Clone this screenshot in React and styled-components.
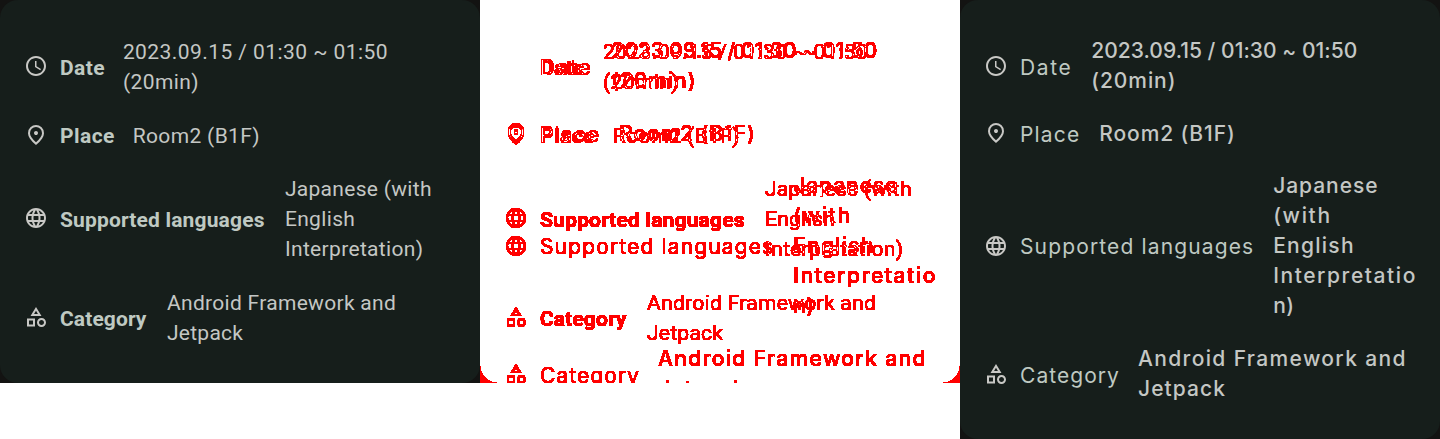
import React from "react";
import styled, { createGlobalStyle } from "styled-components";

const GlobalStyle = createGlobalStyle`
  * { box-sizing: border-box; }
  body { margin: 0; background: #fff; }
`;

const expectedTheme = {
  font: 'Roboto, sans-serif',
  size: 21,
  labelWeight: 700,
  valueWeight: 400,
  labelShift: 3,
};

const actualTheme = {
  font: 'Inter, sans-serif',
  size: 21,
  labelWeight: 400,
  valueWeight: 450,
  labelShift: 3,
};

const normalPalette = {
  frame: "#131312",
  surface: "#161e1b",
  label: "#bfc9c2",
  value: "#c4c7c4",
  icon: "#c8c8c5",
};

const maskPalette = {
  frame: "#500000",
  surface: "#000000",
  label: "#ff0000",
  value: "#ff0000",
  icon: "#ff0000",
};

const Page = styled.main`
  display: grid;
  grid-template-columns: repeat(3, 480px);
  align-items: start;
  width: 1440px;
  height: 439px;
  overflow: hidden;
`;

const Frame = styled.section`
  width: 480px;
  height: ${(p) => p.$height}px;
  overflow: hidden;
  background: ${(p) => p.$palette.frame};
`;

const Card = styled.div`
  display: flex;
  flex-direction: column;
  gap: 24px;
  height: 100%;
  padding: 36px 0 0 24px;
  border-radius: 18px;
  background: ${(p) => p.$palette.surface};
`;

const Row = styled.div`
  display: flex;
  align-items: center;
  flex: none;
  height: ${(p) => p.$height}px;
  margin-bottom: ${(p) => p.$trim || 0}px;
`;

const Icon = styled.svg`
  flex: none;
  width: 24px;
  height: 24px;
  margin-right: 12px;
  fill: ${(p) => p.$color};
`;

const Label = styled.span`
  flex: none;
  width: ${(p) => p.$width}px;
  padding-top: ${(p) => p.$look.labelShift}px;
  font-family: ${(p) => p.$look.font};
  font-size: ${(p) => p.$look.size}px;
  font-weight: ${(p) => p.$look.labelWeight};
  line-height: 30px;
  letter-spacing: ${(p) => p.$tracking}px;
  white-space: nowrap;
  color: ${(p) => p.$palette.label};
`;

const Value = styled.div`
  display: flex;
  flex-direction: column;
  padding-top: ${(p) => p.$inset}px;
  font-family: ${(p) => p.$look.font};
  font-size: ${(p) => p.$look.size}px;
  font-weight: ${(p) => p.$look.valueWeight};
  color: ${(p) => p.$palette.value};
`;

const Line = styled.span`
  line-height: 30px;
  letter-spacing: ${(p) => p.$tracking}px;
  white-space: nowrap;
`;

const Difference = styled.section`
  display: grid;
  width: 480px;
  height: 383px;
  overflow: hidden;
  isolation: isolate;
  background: #000;
  filter: url(#difference-mask);
`;

const Layer = styled.div`
  grid-area: 1 / 1;
  height: 383px;
  overflow: hidden;
  mix-blend-mode: ${(p) => (p.$blend ? "difference" : "normal")};
`;

const Definitions = styled.svg`
  display: none;
`;

const icons = {
  clock:
    "M11.99 2C6.47 2 2 6.48 2 12s4.47 10 9.99 10C17.52 22 22 17.52 22 12S17.52 2 11.99 2zM12 20c-4.42 0-8-3.58-8-8s3.58-8 8-8 8 3.58 8 8-3.58 8-8 8zm.5-13H11v6l5.25 3.15.75-1.23-4.5-2.67z",
  pin:
    "M12 12q.825 0 1.413-.588Q14 10.825 14 10t-.587-1.413Q12.825 8 12 8q-.825 0-1.412.587Q10 9.175 10 10q0 .825.588 1.412Q11.175 12 12 12Zm0 7.35q3.05-2.8 4.525-5.088Q18 11.975 18 10.2q0-2.725-1.738-4.463Q14.525 4 12 4 9.475 4 7.737 5.737 6 7.475 6 10.2q0 1.775 1.475 4.062Q8.95 16.55 12 19.35ZM12 22q-4.025-3.425-6.012-6.363Q4 12.7 4 10.2q0-3.75 2.413-5.975Q8.825 2 12 2t5.587 2.225Q20 6.45 20 10.2q0 2.5-1.987 5.437Q16.025 18.575 12 22Z",
  globe:
    "M11.99 2C6.47 2 2 6.48 2 12s4.47 10 9.99 10C17.52 22 22 17.52 22 12S17.52 2 11.99 2zm6.93 6h-2.95c-.32-1.25-.78-2.45-1.38-3.56 1.84.63 3.37 1.91 4.33 3.56zM12 4.04c.83 1.2 1.48 2.53 1.91 3.96h-3.82c.43-1.43 1.08-2.76 1.91-3.96zM4.26 14C4.1 13.36 4 12.69 4 12s.1-1.36.26-2h3.38c-.08.66-.14 1.32-.14 2s.06 1.34.14 2H4.26zm.82 2h2.95c.32 1.25.78 2.45 1.38 3.56-1.84-.63-3.37-1.9-4.33-3.56zm2.95-8H5.08c.96-1.66 2.49-2.93 4.33-3.56C8.81 5.55 8.35 6.75 8.03 8zM12 19.96c-.83-1.2-1.48-2.53-1.91-3.96h3.82c-.43 1.43-1.08 2.76-1.91 3.96zM14.34 14H9.66c-.09-.66-.16-1.32-.16-2s.07-1.35.16-2h4.68c.09.65.16 1.32.16 2s-.07 1.34-.16 2zm.25 5.56c.6-1.11 1.06-2.31 1.38-3.56h2.95c-.96 1.65-2.49 2.93-4.33 3.56zM16.36 14c.08-.66.14-1.32.14-2s-.06-1.34-.14-2h3.38c.16.64.26 1.31.26 2s-.1 1.36-.26 2h-3.38z",
  category:
    "M12 2l-5.5 9h11L12 2zm0 3.84L13.93 9h-3.87L12 5.84zM17.5 13c-2.49 0-4.5 2.01-4.5 4.5s2.01 4.5 4.5 4.5 4.5-2.01 4.5-4.5-2.01-4.5-4.5-4.5zm0 7c-1.38 0-2.5-1.12-2.5-2.5s1.12-2.5 2.5-2.5 2.5 1.12 2.5 2.5-1.12 2.5-2.5 2.5zM3 21.5h8v-8H3v8zm2-6h4v4H5v-4z",
};

const expectedRows = [
  { icon: "clock", label: "Date", tracking: 0.44, width: 62.9, height: 60, inset: 2,
    lines: [["2023.09.15 / 01:30 ~ 01:50", 0.43], ["(20min)", 0.4]] },
  { icon: "pin", label: "Place", tracking: 0.45, width: 72.7, height: 29, inset: 2,
    lines: [["Room2 (B1F)", 0.35]] },
  { icon: "globe", label: "Supported languages", tracking: 0.16, width: 224.9, height: 90, inset: 2,
    lines: [["Japanese (with", 0.3], ["English", 0.34], ["Interpretation)", 0.34]] },
  { icon: "category", label: "Category", tracking: 0.1, width: 107, height: 60, inset: 2,
    lines: [["Android Framework and", 0.3], ["Jetpack", 0.26]] },
];

const actualRows = [
  { icon: "clock", label: "Date", tracking: 1.6, width: 71.2, height: 60, inset: 0,
    lines: [["2023.09.15 / 01:30 ~ 01:50", 0.04], ["(20min)", 0.95]] },
  { icon: "pin", label: "Place", tracking: 1.15, width: 79.3, height: 26, inset: 2,
    lines: [["Room2 (B1F)", 0.9]] },
  { icon: "globe", label: "Supported languages", tracking: 1.14, width: 253.2, height: 151, trim: -1, inset: 1,
    lines: [["Japanese", 0.95], ["(with", 1.65], ["English", 1.25], ["Interpretatio", 1.57], ["n)", 0.4]] },
  { icon: "category", label: "Category", tracking: 1.05, width: 118, height: 60, inset: 0,
    lines: [["Android Framework and", 1.36], ["Jetpack", 1.08]] },
];

function InfoCard({ rows, look, palette, height }) {
  return (
    <Frame $height={height} $palette={palette}>
      <Card $palette={palette}>
        {rows.map((row) => (
          <Row key={row.label} $height={row.height} $trim={row.trim}>
            <Icon viewBox="0 0 24 24" $color={palette.icon} aria-hidden="true">
              <path d={icons[row.icon]} />
            </Icon>
            <Label $width={row.width} $tracking={row.tracking} $look={look} $palette={palette}>
              {row.label}
            </Label>
            <Value $inset={row.inset} $look={look} $palette={palette}>
              {row.lines.map(([text, tracking]) => (
                <Line key={text} $tracking={tracking}>{text}</Line>
              ))}
            </Value>
          </Row>
        ))}
      </Card>
    </Frame>
  );
}

export default function App() {
  return (
    <>
      <GlobalStyle />
      <Definitions>
        <filter id="difference-mask" x="0" y="0" width="1" height="1" colorInterpolationFilters="sRGB">
          <feColorMatrix values="0 0 0 0 1  0 0 0 0 0  0 0 0 0 0  80 0 0 0 -1.5" />
        </filter>
      </Definitions>
      <Page>
        <InfoCard rows={expectedRows} look={expectedTheme} palette={normalPalette} height={383} />
        <Difference>
          <Layer>
            <InfoCard rows={expectedRows} look={expectedTheme} palette={maskPalette} height={383} />
          </Layer>
          <Layer $blend>
            <InfoCard rows={actualRows} look={actualTheme} palette={maskPalette} height={439} />
          </Layer>
        </Difference>
        <InfoCard rows={actualRows} look={actualTheme} palette={normalPalette} height={439} />
      </Page>
    </>
  );
}
